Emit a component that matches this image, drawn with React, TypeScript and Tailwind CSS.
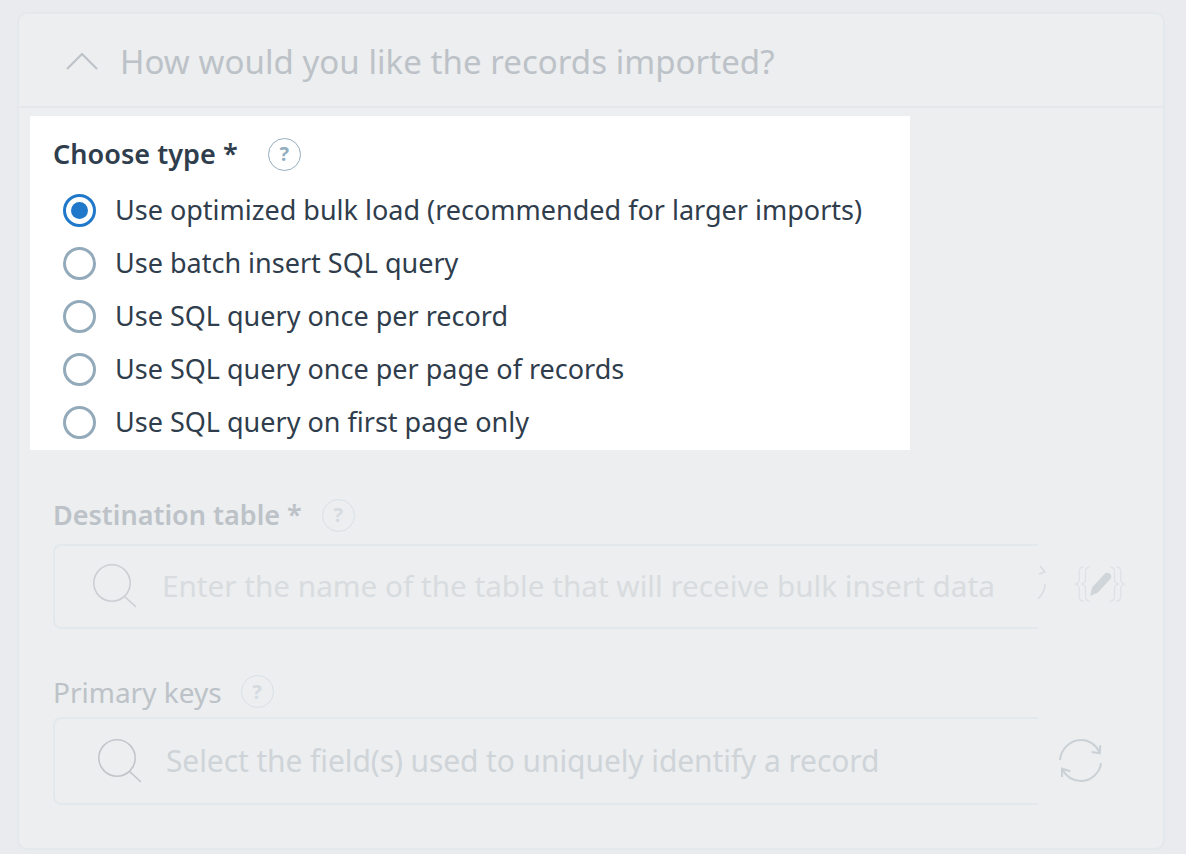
const options = [
  "Use optimized bulk load (recommended for larger imports)",
  "Use batch insert SQL query",
  "Use SQL query once per record",
  "Use SQL query once per page of records",
  "Use SQL query on first page only",
];

function HelpIcon({ className }: { className: string }) {
  return (
    <span
      className={`flex h-[33px] w-[33px] items-center justify-center rounded-full border-[1.5px] text-[20px] font-bold leading-none ${className}`}
    >
      ?
    </span>
  );
}

function Radio({ checked }: { checked: boolean }) {
  if (checked) {
    return (
      <span className="flex h-[33px] w-[33px] items-center justify-center rounded-full border-[3px] border-[#1f78c9]">
        <span className="h-[17px] w-[17px] rounded-full bg-[#1f78c9]" />
      </span>
    );
  }
  return <span className="h-[33px] w-[33px] rounded-full border-[3px] border-[#93aabb]" />;
}

function SearchGlyph({ className }: { className: string }) {
  return (
    <svg width="46" height="44" viewBox="0 0 46 44" fill="none" stroke="currentColor" strokeWidth="1.6" className={`shrink-0 ${className}`}>
      <circle cx="20" cy="19" r="18.2" />
      <path d="M32 32l12 11" />
    </svg>
  );
}

export default function App() {
  return (
    <div className="h-[854px] w-[1186px] overflow-hidden bg-[#e9ebee] pl-[17px] pr-[21px] pt-3 font-['Noto_Sans',sans-serif]">
      <div className="h-[838px] rounded-[10px] border-2 border-[#e3e8ed] bg-[#eceef0]">
        <div className="flex h-[94px] items-center border-b-2 border-[#e3e8ed] pl-[47px] text-[#bcc2c7]">
          <svg width="32" height="18" viewBox="0 0 32 18" fill="none" stroke="currentColor" strokeWidth="2" className="mt-[2px] shrink-0">
            <path d="M1 17L16 2l15 15" />
          </svg>
          <span className="ml-[22px] pt-[3px] text-[33px] tracking-[0.05px]">How would you like the records imported?</span>
        </div>

        <div className="ml-[11px] mt-2 h-[334px] w-[880px] bg-white pl-[23px] pt-[19px] text-[#2f3d4c]">
          <div className="flex h-[38px] items-center">
            <span className="text-[27px] font-semibold tracking-[0.05px]">Choose type *</span>
            <HelpIcon className="ml-[30px] border-[#93aebf] text-[#93aebf]" />
          </div>
          <div className="ml-[10px] mt-[11px] flex flex-col">
            {options.map((o, i) => (
              <label key={o} className="flex h-[53px] items-center gap-[19px]">
                <Radio checked={i === 0} />
                <span className="text-[27px]">{o}</span>
              </label>
            ))}
          </div>
        </div>

        <div className="ml-[34px] mt-[45px] flex items-center">
          <span className="text-[27px] font-semibold text-[#bcc2c7]">Destination table *</span>
          <HelpIcon className="ml-[20px] border-[#d8e0e6] text-[#d5dbe0]" />
        </div>
        <div className="ml-[34px] mt-[8px] flex items-center">
          <div className="flex h-[85px] w-[985px] items-center overflow-hidden rounded-l-[8px] border-y-2 border-l-2 border-[#e3e8ed] pl-[37px]">
            <SearchGlyph className="text-[#cbcfd3]" />
            <span className="ml-[24px] text-[29.7px] whitespace-nowrap text-[#d8dcdf]">
              Enter the name of the table that will receive bulk insert data
            </span>
          </div>
          <svg width="8" height="36" viewBox="0 0 8 36" fill="none" stroke="#d8dde1" strokeWidth="1.6" className="shrink-0 -mt-[6px]">
            <path d="M2 1l5 6-6 2M7 19c0 6-3 11-7 15" />
          </svg>
          <svg width="52" height="38" viewBox="0 0 56 42" fill="none" stroke="#dde1e5" strokeWidth="1.4" className="ml-[28px] -mt-[4px] shrink-0">
            <path d="M10 2c-4 0-5 2-5 6v8c0 3-1 4-4 5 3 1 4 2 4 5v8c0 4 1 6 5 6" />
            <path d="M17 2c-4 0-5 2-5 6v8c0 3-1 4-4 5 3 1 4 2 4 5v8c0 4 1 6 5 6" />
            <path d="M46 2c4 0 5 2 5 6v8c0 3 1 4 4 5-3 1-4 2-4 5v8c0 4-1 6-5 6" />
            <path d="M39 2c4 0 5 2 5 6v8c0 3 1 4 4 5-3 1-4 2-4 5v8c0 4-1 6-5 6" />
            <path d="M18 33l2-8 14-15c1-1 3-1 4 0l1 1c1 1 1 3 0 4L25 30z" fill="#d0d5d9" stroke="#d0d5d9" />
          </svg>
        </div>

        <div className="ml-[34px] mt-[42px] flex items-center">
          <span className="text-[28px] text-[#bcc2c7]">Primary keys</span>
          <HelpIcon className="ml-[19px] border-[#d8e0e6] text-[#d5dbe0]" />
        </div>
        <div className="ml-[34px] mt-[4px] flex items-center">
          <div className="flex h-[88px] w-[985px] items-center overflow-hidden rounded-l-[8px] border-y-2 border-l-2 border-[#e3e8ed] pl-[42px]">
            <SearchGlyph className="text-[#c2c6ca]" />
            <span className="ml-[23px] text-[30px] tracking-[-0.1px] whitespace-nowrap text-[#cfd4d8]">
              Select the field(s) used to uniquely identify a record
            </span>
          </div>
          <svg width="46" height="46" viewBox="0 0 46 46" fill="none" stroke="#cad1d6" strokeWidth="2" className="ml-[20px] shrink-0">
            <path d="M2 22C3 11 12 2 23 2c8 0 15 5 19 13" />
            <path d="M42.3 7.3l-.6 8-8-1.3" />
            <path d="M43 25c-1 10-10 18-20 18-8 0-15-5-19-12" />
            <path d="M4 39v-8.300l8.300 2.600" />
          </svg>
        </div>
      </div>
    </div>
  );
}
